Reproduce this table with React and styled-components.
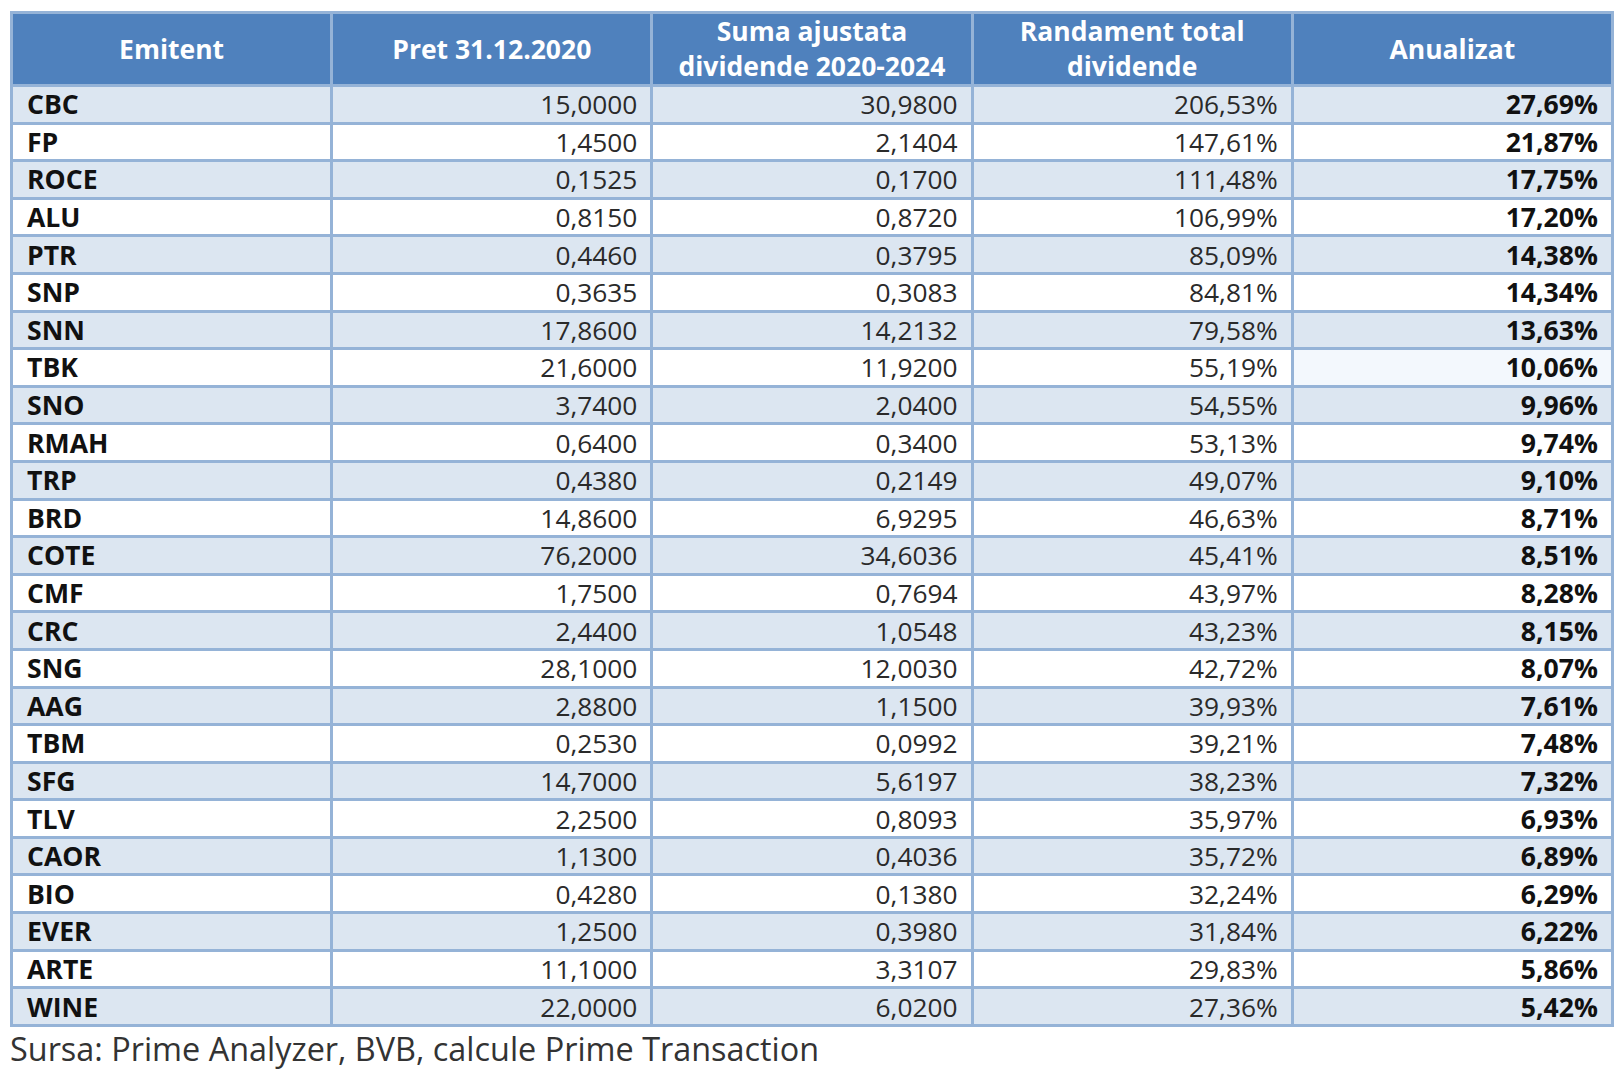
import styled, { createGlobalStyle } from "styled-components";

const GlobalStyle = createGlobalStyle`
    html, body{
        margin: 0;
        padding: 0;
        background: #ffffff;
        font-family: "Open Sans", "Liberation Sans", sans-serif;
    }
`;

const rows = [
    ["CBC", "15,0000", "30,9800", "206,53%", "27,69%"],
    ["FP", "1,4500", "2,1404", "147,61%", "21,87%"],
    ["ROCE", "0,1525", "0,1700", "111,48%", "17,75%"],
    ["ALU", "0,8150", "0,8720", "106,99%", "17,20%"],
    ["PTR", "0,4460", "0,3795", "85,09%", "14,38%"],
    ["SNP", "0,3635", "0,3083", "84,81%", "14,34%"],
    ["SNN", "17,8600", "14,2132", "79,58%", "13,63%"],
    ["TBK", "21,6000", "11,9200", "55,19%", "10,06%"],
    ["SNO", "3,7400", "2,0400", "54,55%", "9,96%"],
    ["RMAH", "0,6400", "0,3400", "53,13%", "9,74%"],
    ["TRP", "0,4380", "0,2149", "49,07%", "9,10%"],
    ["BRD", "14,8600", "6,9295", "46,63%", "8,71%"],
    ["COTE", "76,2000", "34,6036", "45,41%", "8,51%"],
    ["CMF", "1,7500", "0,7694", "43,97%", "8,28%"],
    ["CRC", "2,4400", "1,0548", "43,23%", "8,15%"],
    ["SNG", "28,1000", "12,0030", "42,72%", "8,07%"],
    ["AAG", "2,8800", "1,1500", "39,93%", "7,61%"],
    ["TBM", "0,2530", "0,0992", "39,21%", "7,48%"],
    ["SFG", "14,7000", "5,6197", "38,23%", "7,32%"],
    ["TLV", "2,2500", "0,8093", "35,97%", "6,93%"],
    ["CAOR", "1,1300", "0,4036", "35,72%", "6,89%"],
    ["BIO", "0,4280", "0,1380", "32,24%", "6,29%"],
    ["EVER", "1,2500", "0,3980", "31,84%", "6,22%"],
    ["ARTE", "11,1000", "3,3107", "29,83%", "5,86%"],
    ["WINE", "22,0000", "6,0200", "27,36%", "5,42%"],
];

const Page = styled.main`
    padding: 11px 11px 0 10px;
    display: flex;
    flex-direction: column;
    align-items: flex-start;
`;

const Table = styled.table`
    width: 1604px;
    border-collapse: collapse;
    table-layout: fixed;
    border: 3px solid #95b3d7;
    font-size: 26.3px;
    color: #1c1c1c;
`;

const HeadRow = styled.tr`
    height: 73px;
    background: #4f81bd;
`;

const HeadCell = styled.th`
    border: 3px solid #95b3d7;
    color: #ffffff;
    font-weight: 700;
    font-size: 26.5px;
    line-height: 35px;
    padding: 0 6px;
    text-align: center;
    vertical-align: middle;
    white-space: nowrap;
`;

const Row = styled.tr`
    height: 37.6px;
    background: ${({$striped}) => $striped ? "#dce6f1" : "#ffffff"};
`;

const Cell = styled.td`
    border: 3px solid #95b3d7;
    padding: 0 13px 0 14px;
    line-height: 30px;
    text-align: ${({$left}) => $left ? "left" : "right"};
    font-weight: ${({$bold}) => $bold ? 700 : 400};
    font-size: ${({$bold}) => $bold ? "26.6px" : "26.3px"};
    color: ${({$bold}) => $bold ? "#111111" : "#2a2a2a"};
    background: ${({$tint}) => $tint || "transparent"};
    white-space: nowrap;
`;

const Source = styled.p`
    margin: 0;
    font-size: 32.4px;
    line-height: 42px;
    color: #333333;
`;

const App = () => {
    return <>
        <GlobalStyle />
        <Page>
            <Table>
                <thead>
                    <HeadRow>
                        <HeadCell>Emitent</HeadCell>
                        <HeadCell>Pret 31.12.2020</HeadCell>
                        <HeadCell>Suma ajustata<br />dividende 2020-2024</HeadCell>
                        <HeadCell>Randament total<br />dividende</HeadCell>
                        <HeadCell>Anualizat</HeadCell>
                    </HeadRow>
                </thead>
                <tbody>
                    {rows.map((r, i) =>
                        <Row key={r[0]} $striped={i % 2 === 0}>
                            <Cell $left $bold>{r[0]}</Cell>
                            <Cell>{r[1]}</Cell>
                            <Cell>{r[2]}</Cell>
                            <Cell>{r[3]}</Cell>
                            <Cell $bold $tint={r[0] === "TBK" ? "#f3f8fd" : ""}>{r[4]}</Cell>
                        </Row>
                    )}
                </tbody>
            </Table>
            <Source>Sursa: Prime Analyzer, BVB, calcule Prime Transaction</Source>
        </Page>
    </>
}

export default App
